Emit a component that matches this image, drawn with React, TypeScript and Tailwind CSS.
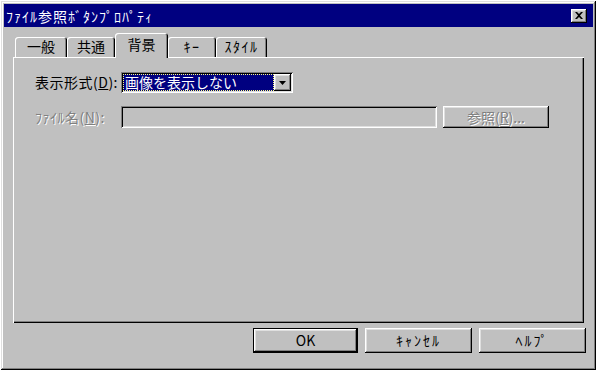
import React from "react";

const font = { fontFamily: '"Noto Sans CJK JP", "Noto Sans", sans-serif' };

const raised =
  "shadow-[inset_-1px_-1px_#000,inset_1px_1px_#fff,inset_-2px_-2px_#808080,inset_2px_2px_#dfdfdf]";
const sunken =
  "shadow-[inset_1px_1px_#808080,inset_-1px_-1px_#fff,inset_2px_2px_#000,inset_-2px_-2px_#dfdfdf]";

function Tab({ label, w, selected, half }: { label: string; w: string; selected?: boolean; half?: boolean }) {
  return (
    <div
      className={`${w} ${
        selected ? "h-[25px] relative z-10 -mb-[1px] pt-[2px]" : "h-[20px] pt-[0px]"
      } bg-[#c0c0c0] rounded-t-[3px] shadow-[inset_1px_1px_#fff,inset_-1px_0_#000,inset_-2px_0_#808080] flex justify-center items-start text-[14px] leading-[19px] text-black ${
        half ? "tracking-[1.5px]" : ""
      }`}
    >
      {label}
    </div>
  );
}

function Btn({ label, w, def, half }: { label: string; w: string; def?: boolean; half?: boolean }) {
  return (
    <div className={`${w} h-[25px] ${def ? "border border-black" : ""} bg-[#c0c0c0]`}>
      <div
        className={`w-full h-full ${raised} flex items-center justify-center text-[14px] text-black ${
          half ? "tracking-[2px]" : ""
        }`}
      >
        {label}
      </div>
    </div>
  );
}

export default function App() {
  return (
    <div className="w-[599px] h-[373px] bg-white pt-[1px] pl-[1px]" style={font}>
      <div className="w-[595px] h-[369px] bg-[#c0c0c0] p-[3px] flex flex-col shadow-[inset_-1px_-1px_#000,inset_1px_1px_#dfdfdf,inset_-2px_-2px_#808080,inset_2px_2px_#fff]">
        {/* title bar */}
        <div className="h-[23px] bg-[#000080] flex items-center justify-between pl-[2px] pr-[6px]">
          <span className="text-white text-[14px] tracking-[1px] leading-none">ﾌｧｲﾙ参照ﾎﾞﾀﾝﾌﾟﾛﾊﾟﾃｨ</span>
          <div className={`w-[16px] h-[14px] bg-[#c0c0c0] ${raised} flex items-center justify-center`}>
            <svg width="8" height="7" viewBox="0 0 8 7">
              <path d="M0 0h2l2 2 2-2h2L5 3.5 8 7H6L4 5 2 7H0l3-3.5z" fill="#000" />
            </svg>
          </div>
        </div>

        {/* tabs */}
        <div className="mt-[6px] h-[24px] pl-[11px] flex items-end">
          <Tab label="一般" w="w-[52px]" />
          <Tab label="共通" w="w-[48px]" />
          <Tab label="背景" w="w-[53px]" selected />
          <Tab label="ｷｰ" w="w-[48px]" half />
          <Tab label="ｽﾀｲﾙ" w="w-[51px]" half />
        </div>

        {/* panel */}
        <div className="ml-[9px] w-[571px] h-[266px] bg-[#c0c0c0] shadow-[inset_1px_1px_#fff,inset_-1px_-1px_#000,inset_-2px_-2px_#808080] pl-[22px] pt-[15px]">
          <div className="flex items-center h-[21px]">
            <div className="w-[86px] text-[14px] text-black tracking-[0.5px] whitespace-nowrap">
              表示形式(<span className="underline">D</span>):
            </div>
            <div className={`w-[172px] h-[21px] bg-white ${sunken} p-[2px] flex`}>
              <div className="flex-1 bg-[#000080] outline-1 outline-dotted outline-[#ffff80] -outline-offset-1 text-white text-[14px] leading-[17px] pl-[2px]">
                画像を表示しない
              </div>
              <div className={`w-[17px] h-[17px] bg-[#c0c0c0] ${raised} flex items-center justify-center`}>
                <svg width="7" height="4" viewBox="0 0 7 4">
                  <path d="M0 0h7L3.5 4z" fill="#000" />
                </svg>
              </div>
            </div>
          </div>

          <div className="flex items-center h-[22px] mt-[13px]">
            <div className="w-[86px] text-[14px] text-[#808080] [text-shadow:1px_1px_0_#fff] tracking-[0.5px] whitespace-nowrap">
              ﾌｧｲﾙ名(<span className="underline">N</span>):
            </div>
            <div className={`w-[316px] h-[22px] bg-[#c0c0c0] ${sunken}`} />
            <div className={`ml-[6px] w-[106px] h-[22px] ${raised} flex items-center justify-center text-[14px] text-[#808080] [text-shadow:1px_1px_0_#fff]`}>
              参照(<span className="underline">R</span>)...
            </div>
          </div>
        </div>

        {/* buttons */}
        <div className="mt-[5px] flex justify-end gap-[7px] pr-[7px]">
          <Btn label="OK" w="w-[105px]" def />
          <Btn label="ｷｬﾝｾﾙ" w="w-[107px]" half />
          <Btn label="ﾍﾙﾌﾟ" w="w-[107px]" half />
        </div>
      </div>
    </div>
  );
}
